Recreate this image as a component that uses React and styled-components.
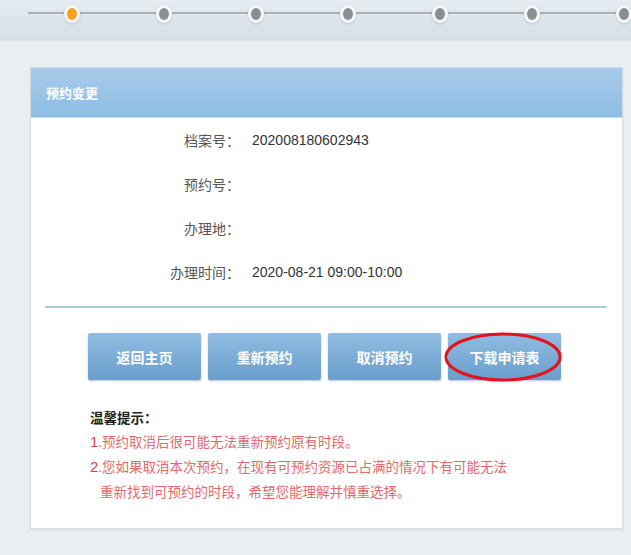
import React from 'react';
import styled, { createGlobalStyle } from 'styled-components';

const GlobalStyle = createGlobalStyle`
  html, body {
    margin: 0;
    padding: 0;
    background: #e9eef3;
    font-family: "Liberation Sans", "Noto Sans CJK SC", sans-serif;
  }
`;

const Page = styled.div`
  width: 631px;
  height: 555px;
  overflow: hidden;
  background: #e9eef3;
`;

const StepBar = styled.div`
  position: relative;
  height: 40px;
  background: linear-gradient(#e6ecf1, #d3dee7);
  border-bottom: 1px solid #dfe6ec;
  display: flex;
  padding-left: 26px;
`;

const StepLine = styled.div`
  position: absolute;
  left: 28px;
  right: 0;
  top: 12px;
  height: 2px;
  background: #a9b2ba;
`;

const Step = styled.div`
  flex: 0 0 92px;
  height: 28px;
  display: flex;
  justify-content: center;
  align-items: center;
`;

const Dot = styled.span`
  position: relative;
  width: 10px;
  height: 12px;
  border-radius: 50%;
  background: ${p => (p.$active ? '#f7a21b' : '#8c8f92')};
  box-shadow: 0 0 0 3px #f4f7f9, 0 1px 3px 3px rgba(120, 140, 160, 0.35);
`;

const Card = styled.div`
  margin: 26px 0 0 30px;
  width: 591px;
  background: #fff;
  border: 1px solid #d4dce4;
  box-shadow: 0 1px 2px rgba(0, 0, 0, 0.08);
`;

const CardHeader = styled.div`
  height: 49px;
  display: flex;
  align-items: center;
  padding-left: 15px;
  background: linear-gradient(#a7cbea, #8dbce4);
  color: #fff;
  font-family: "Noto Sans CJK SC", sans-serif;
  font-size: 13px;
  font-weight: 700;
  border-bottom: 1px solid #c9dff0;
`;

const Info = styled.div`
  display: grid;
  grid-template-columns: 209px auto;
  column-gap: 12px;
  grid-auto-rows: 44px;
  align-items: center;
`;

const Label = styled.div`
  text-align: right;
  color: #555;
  font-family: "Noto Sans CJK SC", sans-serif;
  font-size: 14px;
`;

const Value = styled.div`
  color: #333;
  font-family: "Liberation Sans", sans-serif;
  font-size: 14px;
`;

const Divider = styled.div`
  margin: 12px 15px 0 14px;
  height: 2px;
  background: #aecbd8;
`;

const Buttons = styled.div`
  display: flex;
  gap: 7px;
  margin: 25px 0 0 57px;
`;

const ButtonWrap = styled.div`
  position: relative;
`;

const Button = styled.div`
  width: 113px;
  height: 47px;
  display: flex;
  align-items: center;
  justify-content: center;
  border-radius: 2px;
  background: linear-gradient(#90bce2, #6a9ecc);
  box-shadow: 0 1px 2px rgba(60, 90, 120, 0.35);
  color: #fff;
  font-family: "Noto Sans CJK SC", sans-serif;
  font-size: 14px;
  font-weight: 700;
`;

const Ring = styled.svg`
  position: absolute;
  left: -5px;
  top: -3px;
  pointer-events: none;
`;

const Tips = styled.div`
  margin: 25px 0 0 59px;
  padding-bottom: 25px;
  font-family: "Noto Sans CJK SC", sans-serif;
  font-size: 13.5px;
  line-height: 24px;
`;

const TipsTitle = styled.div`
  color: #222;
  font-weight: 700;
`;

const TipLine = styled.div`
  color: #e26a6a;
  padding-left: ${p => (p.$indent ? '10px' : '0')};
`;

const Num = styled.span`
  font-family: "Liberation Sans", sans-serif;
  color: #d94545;
  font-size: 15px;
`;

const steps = [true, false, false, false, false, false, false];

const rows = [
  ['档案号：', '202008180602943'],
  ['预约号：', ''],
  ['办理地：', ''],
  ['办理时间：', '2020-08-21 09:00-10:00'],
];

export default function App() {
  return (
    <Page>
      <GlobalStyle />
      <StepBar>
        <StepLine />
        {steps.map((a, i) => (
          <Step key={i}>
            <Dot $active={a} />
          </Step>
        ))}
      </StepBar>
      <Card>
        <CardHeader>预约变更</CardHeader>
        <Info>
          {rows.map(([l, v]) => (
            <React.Fragment key={l}>
              <Label>{l}</Label>
              <Value>{v}</Value>
            </React.Fragment>
          ))}
        </Info>
        <Divider />
        <Buttons>
          <Button>返回主页</Button>
          <Button>重新预约</Button>
          <Button>取消预约</Button>
          <ButtonWrap>
            <Button>下载申请表</Button>
            <Ring width="124" height="54" viewBox="0 0 124 54">
              <ellipse cx="60" cy="27" rx="57" ry="23" fill="none" stroke="#e3121c" strokeWidth="3" />
            </Ring>
          </ButtonWrap>
        </Buttons>
        <Tips>
          <TipsTitle>温馨提示：</TipsTitle>
          <TipLine><Num>1</Num>.预约取消后很可能无法重新预约原有时段。</TipLine>
          <TipLine><Num>2</Num>.您如果取消本次预约，在现有可预约资源已占满的情况下有可能无法</TipLine>
          <TipLine $indent>重新找到可预约的时段，希望您能理解并慎重选择。</TipLine>
        </Tips>
      </Card>
    </Page>
  );
}
